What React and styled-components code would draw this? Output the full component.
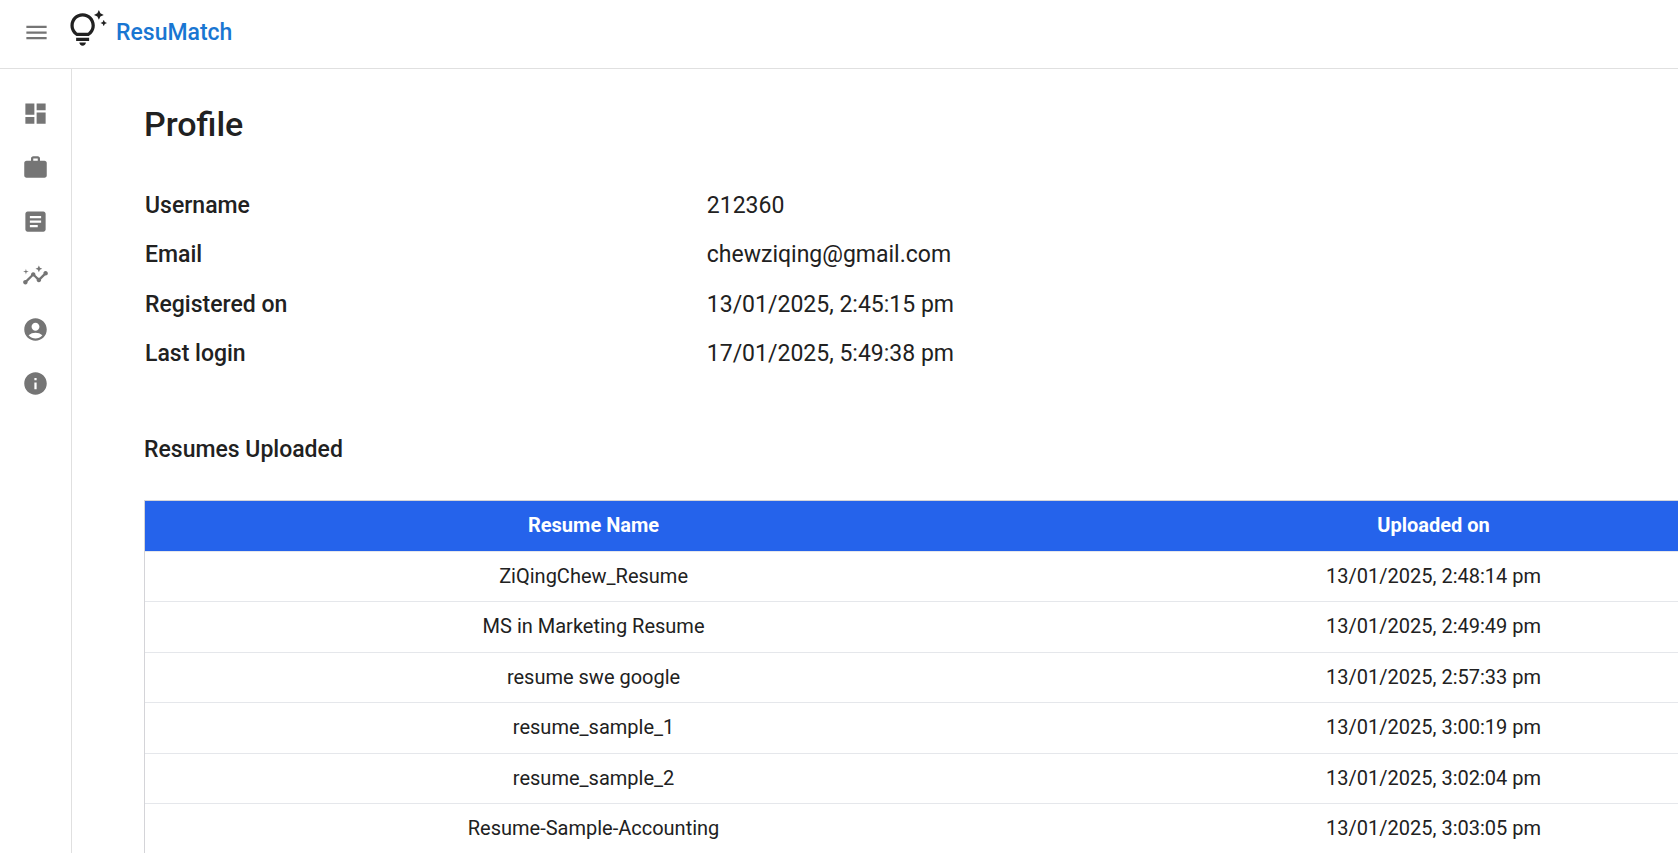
import React from "react";
import styled, { createGlobalStyle } from "styled-components";
import {
  MdMenu,
  MdDashboard,
  MdWork,
  MdArticle,
  MdInsights,
  MdAccountCircle,
  MdInfo,
  MdOutlineTipsAndUpdates,
} from "react-icons/md";

const GlobalStyle = createGlobalStyle`
  *, *::before, *::after { box-sizing: border-box; }
  body {
    margin: 0;
    background: #fff;
    color: #212121;
    font-family: Roboto, "Liberation Sans", sans-serif;
  }
`;

const Page = styled.div`
  display: flex;
  flex-direction: column;
  height: 100vh;
  overflow: hidden;
`;

const TopBar = styled.header`
  display: flex;
  align-items: flex-start;
  flex: none;
  height: 69px;
  padding: 10px 23px;
  border-bottom: 1px solid #e0e0e0;
`;

const MenuButton = styled.button`
  display: flex;
  margin: 9px 18px 0 0;
  padding: 0;
  border: 0;
  background: none;
  color: #757575;
  font-size: 27px;
  cursor: pointer;
`;

const Brand = styled.a`
  display: flex;
  align-items: flex-start;
  gap: 9px;
  color: #1976d2;
  font-size: 23px;
  font-weight: 500;
  line-height: 46px;
  text-decoration: none;

  svg {
    color: #212121;
    font-size: 39px;
  }
`;

const Body = styled.div`
  display: flex;
  flex: 1;
  min-height: 0;
`;

const SideNav = styled.nav`
  display: flex;
  flex-direction: column;
  align-items: center;
  flex: none;
  gap: 27px;
  width: 72px;
  padding-top: 31px;
  border-right: 1px solid #e0e0e0;
`;

const NavLink = styled.a`
  display: flex;
  color: #757575;
  font-size: 27px;
`;

const Main = styled.main`
  flex: 1;
  min-width: 0;
  padding: 32px 0 0 72px;
  overflow: hidden;
`;

const Content = styled.div`
  width: calc(100% + 148px);
`;

const Title = styled.h1`
  margin: 0 0 34px;
  font-size: 34px;
  font-weight: 500;
  line-height: 46px;
`;

const Subtitle = styled.h2`
  margin: 55px 0 34px;
  font-size: 23px;
  font-weight: 500;
  line-height: 32px;
`;

const Details = styled.table`
  width: 100%;
  table-layout: fixed;
  border-collapse: collapse;
  font-size: 23px;
  line-height: 28px;
  text-align: left;

  th {
    width: 33.4%;
    font-weight: 500;
  }

  th, td {
    height: 49px;
    padding: 1px;
  }

  tr:nth-child(even) td {
    height: 50px;
  }
`;

const Resumes = styled.table`
  width: 100%;
  table-layout: fixed;
  border: 1px solid #d4d4d8;
  border-spacing: 0;
  font-size: 20px;
  text-align: center;

  th, td {
    height: 50px;
    padding: 0 16px 2px;
    border-bottom: 1px solid #e5e7eb;
  }

  tr:nth-child(even) td {
    height: 51px;
  }

  th {
    height: 51px;
    background: #2563eb;
    color: #fff;
    font-weight: 700;
  }
`;

const NameHeader = styled.th`
  width: 53.4%;
`;

const navItems = [
  ["Dashboard", MdDashboard],
  ["Jobs", MdWork],
  ["Resumes", MdArticle],
  ["Insights", MdInsights],
  ["Profile", MdAccountCircle],
  ["About", MdInfo],
];

const details = [
  ["Username", "212360"],
  ["Email", "chewziqing@gmail.com"],
  ["Registered on", "13/01/2025, 2:45:15 pm"],
  ["Last login", "17/01/2025, 5:49:38 pm"],
];

const resumes = [
  ["ZiQingChew_Resume", "13/01/2025, 2:48:14 pm"],
  ["MS in Marketing Resume", "13/01/2025, 2:49:49 pm"],
  ["resume swe google", "13/01/2025, 2:57:33 pm"],
  ["resume_sample_1", "13/01/2025, 3:00:19 pm"],
  ["resume_sample_2", "13/01/2025, 3:02:04 pm"],
  ["Resume-Sample-Accounting", "13/01/2025, 3:03:05 pm"],
];

export default function App() {
  return (
    <Page>
      <GlobalStyle />
      <TopBar>
        <MenuButton type="button" aria-label="Toggle menu">
          <MdMenu />
        </MenuButton>
        <Brand href="#home">
          <MdOutlineTipsAndUpdates />
          ResuMatch
        </Brand>
      </TopBar>
      <Body>
        <SideNav>
          {navItems.map(([label, Icon]) => (
            <NavLink key={label} href={`#${label.toLowerCase()}`} aria-label={label}>
              <Icon />
            </NavLink>
          ))}
        </SideNav>
        <Main>
          <Content>
            <Title>Profile</Title>
            <Details>
              <tbody>
                {details.map(([label, value]) => (
                  <tr key={label}>
                    <th scope="row">{label}</th>
                    <td>{value}</td>
                  </tr>
                ))}
              </tbody>
            </Details>
            <Subtitle>Resumes Uploaded</Subtitle>
            <Resumes>
              <thead>
                <tr>
                  <NameHeader scope="col">Resume Name</NameHeader>
                  <th scope="col">Uploaded on</th>
                </tr>
              </thead>
              <tbody>
                {resumes.map(([name, date]) => (
                  <tr key={name}>
                    <td>{name}</td>
                    <td>{date}</td>
                  </tr>
                ))}
              </tbody>
            </Resumes>
          </Content>
        </Main>
      </Body>
    </Page>
  );
}
